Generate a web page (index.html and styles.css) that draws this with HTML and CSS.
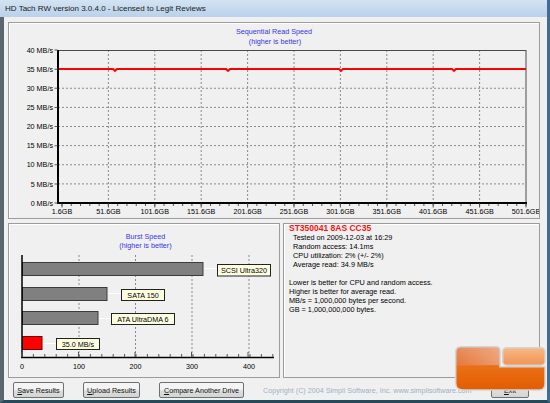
FILE: index.html
```html
<!DOCTYPE html>
<html lang="en">
<head>
    <meta charset="UTF-8">
    <title>HD Tach RW</title>
    <link rel="stylesheet" href="styles.css">
</head>
<body>

<div class="window">
    <div class="titlebar">HD Tach RW version 3.0.4.0 - Licensed to Legit Reviews</div>

    <div class="client">

        <!-- sequential read graph -->
        <div class="panel seq">
            <svg class="chart" width="530" height="195" viewBox="9 23 530 195">
                <text class="ctitle" x="274" y="34">Sequential Read Speed</text>
                <text class="ctitle" x="275" y="44">(higher is better)</text>

                <g class="grid">
                    <line x1="58" y1="69.1" x2="526" y2="69.1"/>
                    <line x1="58" y1="88.25" x2="526" y2="88.25"/>
                    <line x1="58" y1="107.4" x2="526" y2="107.4"/>
                    <line x1="58" y1="126.5" x2="526" y2="126.5"/>
                    <line x1="58" y1="145.6" x2="526" y2="145.6"/>
                    <line x1="58" y1="164.75" x2="526" y2="164.75"/>
                    <line x1="58" y1="183.9" x2="526" y2="183.9"/>
                    <line x1="108.4" y1="50" x2="108.4" y2="203"/>
                    <line x1="154.8" y1="50" x2="154.8" y2="203"/>
                    <line x1="201.2" y1="50" x2="201.2" y2="203"/>
                    <line x1="247.6" y1="50" x2="247.6" y2="203"/>
                    <line x1="294" y1="50" x2="294" y2="203"/>
                    <line x1="340.4" y1="50" x2="340.4" y2="203"/>
                    <line x1="386.8" y1="50" x2="386.8" y2="203"/>
                    <line x1="433.2" y1="50" x2="433.2" y2="203"/>
                    <line x1="479.6" y1="50" x2="479.6" y2="203"/>
                </g>

                <rect class="frame" x="58.5" y="50.5" width="467.5" height="152.5"/>
                <line class="axis" x1="58" y1="50" x2="58" y2="204"/>
                <line class="axis" x1="57" y1="203" x2="527" y2="203"/>

                <!-- ticks -->
                <line class="tick" x1="56" y1="49.5" x2="56" y2="205" stroke-dasharray="1 18.125" stroke-width="3"/>
                <line class="tick" x1="61.5" y1="205" x2="527" y2="205" stroke-dasharray="1 8.28" stroke-width="2"/>
                <line class="tick" x1="61.5" y1="205.5" x2="527" y2="205.5" stroke-dasharray="1 45.4" stroke-width="4"/>

                <path class="read" d="M59 69 H113 l2 2 l2 -2 H226 l2 2 l2 -2 H339 l2 2 l2 -2 H452 l2 2 l2 -2 H526"/>

                <g class="lbl ylbl">
                    <text x="53" y="52.6">40 MB/s</text>
                    <text x="53" y="71.7">35 MB/s</text>
                    <text x="53" y="90.8">30 MB/s</text>
                    <text x="53" y="110">25 MB/s</text>
                    <text x="53" y="129.1">20 MB/s</text>
                    <text x="53" y="148.2">15 MB/s</text>
                    <text x="53" y="167.3">10 MB/s</text>
                    <text x="53" y="186.5">5 MB/s</text>
                    <text x="53" y="205.6">0 MB/s</text>
                </g>
                <g class="lbl xlbl">
                    <text x="62" y="214.3">1.6GB</text>
                    <text x="108.4" y="214.3">51.6GB</text>
                    <text x="154.8" y="214.3">101.6GB</text>
                    <text x="201.2" y="214.3">151.6GB</text>
                    <text x="247.6" y="214.3">201.6GB</text>
                    <text x="294" y="214.3">251.6GB</text>
                    <text x="340.4" y="214.3">301.6GB</text>
                    <text x="386.8" y="214.3">351.6GB</text>
                    <text x="433.2" y="214.3">401.6GB</text>
                    <text x="479.6" y="214.3">451.6GB</text>
                    <text x="526" y="214.3">501.6GB</text>
                </g>
            </svg>
        </div>

        <div class="lower">
            <!-- burst speed bars -->
            <div class="panel burst">
                <svg class="chart" width="270" height="153" viewBox="9 224 270 153">
                    <text class="ctitle" x="145.5" y="238.6">Burst Speed</text>
                    <text class="ctitle" x="145.5" y="248.3">(higher is better)</text>

                    <g class="grid">
                        <line x1="79" y1="255" x2="79" y2="357"/>
                        <line x1="135.5" y1="255" x2="135.5" y2="357"/>
                        <line x1="192" y1="255" x2="192" y2="357"/>
                        <line x1="249" y1="255" x2="249" y2="357"/>
                    </g>

                    <g class="leader">
                        <line x1="203" y1="268.5" x2="217" y2="268.5"/>
                        <line x1="107" y1="293.5" x2="121" y2="293.5"/>
                        <line x1="98" y1="318.5" x2="111" y2="318.5"/>
                        <line x1="42" y1="343.5" x2="56" y2="343.5"/>
                    </g>

                    <rect class="bar" x="22.5" y="262.5" width="180.5" height="13"/>
                    <rect class="bar" x="22.5" y="287.5" width="84.5" height="13"/>
                    <rect class="bar" x="22.5" y="311.5" width="75.5" height="13"/>
                    <rect class="bar mine" x="22.5" y="336.5" width="19.5" height="13"/>

                    <g class="tag">
                        <rect x="217.5" y="264.5" width="53" height="11.5"/>
                        <rect x="121.5" y="289.5" width="43" height="11"/>
                        <rect x="111.5" y="313.5" width="63" height="11"/>
                        <rect x="56.5" y="338.5" width="43" height="11"/>
                    </g>
                    <g class="lbl xlbl">
                        <text x="244" y="273">SCSI Ultra320</text>
                        <text x="143" y="297.6">SATA 150</text>
                        <text x="143" y="321.6">ATA UltraDMA 6</text>
                        <text x="78" y="346.6">35.0 MB/s</text>
                    </g>

                    <line class="axis thin" x1="22" y1="255" x2="22" y2="358"/>
                    <line class="axis thin" x1="21" y1="357.5" x2="274" y2="357.5"/>
                    <line class="tick" x1="21.5" y1="355.5" x2="274" y2="355.5" stroke-dasharray="1 10.4" stroke-width="3"/>
                    <line class="tick" x1="21.5" y1="354.5" x2="274" y2="354.5" stroke-dasharray="1 55.5" stroke-width="5"/>

                    <g class="lbl xlbl">
                        <text x="22" y="369">0</text>
                        <text x="79" y="369">100</text>
                        <text x="135.5" y="369">200</text>
                        <text x="192" y="369">300</text>
                        <text x="249" y="369">400</text>
                    </g>
                </svg>
            </div>

            <!-- drive summary -->
            <div class="panel info">
                <div class="drive">ST350041 8AS CC35</div>
                <div class="ind">Tested on 2009-12-03 at 16:29</div>
                <div class="ind">Random access: 14.1ms</div>
                <div class="ind">CPU utilization: 2% (+/- 2%)</div>
                <div class="ind">Average read: 34.9 MB/s</div>
                <div class="gap"></div>
                <div>Lower is better for CPU and random access.</div>
                <div>Higher is better for average read.</div>
                <div>MB/s = 1,000,000 bytes per second.</div>
                <div>GB = 1,000,000,000 bytes.</div>
            </div>
        </div>

        <div class="buttons">
            <button class="btn b-save"><u>S</u>ave Results</button>
            <button class="btn b-upload"><u>U</u>pload Results</button>
            <button class="btn b-compare"><u>C</u>ompare Another Drive</button>
            <span class="copyright">Copyright (C) 2004 Simpli Software, Inc. www.simplisoftware.com</span>
            <button class="btn b-exit"><u>E</u>xit</button>
        </div>
    </div>

    <!-- watermark logo -->
    <svg class="logo" width="95" height="48" viewBox="0 0 95 48">
        <defs>
            <linearGradient id="lg-main" x1="0" y1="0" x2="0" y2="1">
                <stop offset="0" stop-color="#e88d5c"/>
                <stop offset="0.43" stop-color="#e6783a"/>
                <stop offset="0.45" stop-color="#ea7016"/>
                <stop offset="1" stop-color="#e35c02"/>
            </linearGradient>
            <linearGradient id="lg-block" x1="0" y1="0" x2="0" y2="1">
                <stop offset="0" stop-color="#f8b888"/>
                <stop offset="1" stop-color="#f09552"/>
            </linearGradient>
            <linearGradient id="lg-shine" x1="0" y1="0" x2="1" y2="0">
                <stop offset="0" stop-color="#fff" stop-opacity="0"/>
                <stop offset="1" stop-color="#fff" stop-opacity="0.25"/>
            </linearGradient>
        </defs>
        <path class="logo-edge" d="M8 1.7 H43 Q47 1.7 47 5.7 V21.7 H92 V39 Q92 45 86 45 H10 Q2.7 45 2.7 38 V7 Q2.7 1.7 8 1.7 Z" fill="url(#lg-main)"/>
        <path d="M8 2.5 H43 Q46 2.5 46 5.7 V20 H3.5 V7 Q3.5 2.5 8 2.5 Z" fill="url(#lg-shine)"/>
        <rect class="logo-edge" x="49.7" y="2.7" width="42.3" height="17.5" rx="4" fill="url(#lg-block)"/>
    </svg>
</div>

</body>
</html>
```

FILE: styles.css
```css
* {
    box-sizing: border-box;
}

body {
    margin: 0;
    width: 550px;
    height: 403px;
    overflow: hidden;
    background: #f0f0f0;
    font-family: "Liberation Sans", Arial, sans-serif;
}

.window {
    position: relative;
    width: 550px;
    height: 403px;
    display: flex;
    flex-direction: column;
    background: #f0f0f0;
    border-left: 4px solid #5a676e;
    border-right: 3px solid #3f6d96;
    border-bottom: 3px solid #274a5b;
}

.titlebar {
    flex: none;
    height: 17px;
    margin: 0 -3px 0 -4px;
    padding: 1px 0 0 5px;
    background: linear-gradient(#d3e3f3, #b9d1ea);
    border-right: 3px solid #3f6d96;
    color: #1a1a1a;
    font-size: 8px;
    line-height: 16px;
}

.client {
    flex: 1;
    display: flex;
    flex-direction: column;
    padding: 5px 7px 2px 4px;
}

/* group boxes */
.panel {
    border: 1px solid #9c9c9c;
    box-shadow: inset 1px 1px 0 #fff;
    background: #f0f0f0;
}

.seq {
    height: 197px;
}

.chart {
    display: block;
}

.lower {
    display: flex;
    gap: 3px;
    height: 155px;
    margin-top: 4px;
}

.burst {
    width: 272px;
}

.info {
    flex: 1;
    padding: 0 0 0 5px;
    font-size: 7.3px;
    line-height: 9.05px;
    color: #000;
}

.drive {
    color: #ff1010;
    font-weight: bold;
    font-size: 8.5px;
}

.ind {
    padding-left: 4px;
}

.gap {
    height: 9.05px;
}

/* svg bits */
.ctitle {
    font: 7.2px "Liberation Sans", Arial, sans-serif;
    fill: #3434ee;
    text-anchor: middle;
}

.lbl {
    font: 7.2px "Liberation Sans", Arial, sans-serif;
    fill: #000;
}

.ylbl {
    text-anchor: end;
}

.xlbl {
    text-anchor: middle;
}

.grid line {
    stroke: #8a8a8a;
    stroke-width: 1;
    stroke-dasharray: 2 2;
}

.frame {
    fill: none;
    stroke: #4a4a4a;
    stroke-width: 1;
}

.axis {
    stroke: #000;
    stroke-width: 2;
}

.axis.thin {
    stroke-width: 1.5;
}

.tick {
    stroke: #555;
}

.read {
    fill: none;
    stroke: #f00;
    stroke-width: 1.8;
}

.bar {
    fill: #808080;
    stroke: #3c3c3c;
    stroke-width: 1;
}

.bar.mine {
    fill: #ff0000;
    stroke: #7a0000;
}

.leader line {
    stroke: #fff;
    stroke-width: 1;
}

.tag rect {
    fill: #ffffe1;
    stroke: #222;
    stroke-width: 1;
}

/* bottom row */
.buttons {
    display: flex;
    align-items: center;
    gap: 19px;
    height: 16px;
    margin-top: 4px;
    padding-left: 5px;
}

.btn {
    height: 16px;
    padding: 0;
    border: 1px solid #707070;
    border-radius: 2px;
    background: linear-gradient(#f4f4f4 45%, #dedede 55%, #d4d4d4);
    color: #111;
    font-family: "Liberation Sans", Arial, sans-serif;
    font-size: 7.2px;
}

.b-save { width: 51px; }
.b-upload { width: 57px; }
.b-compare { width: 85px; }
.b-exit {
    width: 38px;
    margin-left: auto;
    margin-right: 11px;
}

.copyright {
    color: #9cb0c6;
    font-size: 7.2px;
    white-space: nowrap;
}

.logo {
    position: absolute;
    left: 449px;
    top: 345px;
}

.logo-edge {
    stroke: #d4d4d4;
    stroke-width: 1.5;
}
```
